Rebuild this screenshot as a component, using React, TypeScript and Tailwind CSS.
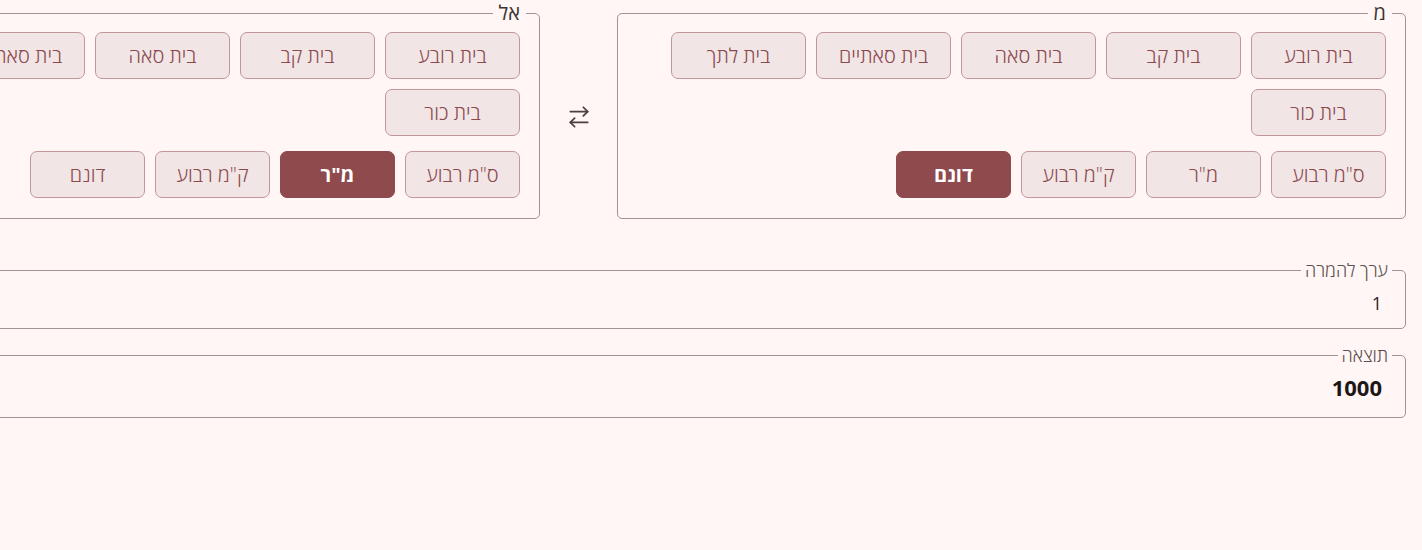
import React from "react";
import { ArrowRightLeft } from "lucide-react";

const groupA = ["בית רובע", "בית קב", "בית סאה", "בית סאתיים", "בית לתך", "בית כור"];
const groupB = ['ס"מ רבוע', 'מ"ר', 'ק"מ רבוע', "דונם"];

function UnitButton({ label, selected, wide }: { label: string; selected: boolean; wide: boolean }) {
  return (
    <button
      type="button"
      className={
        (wide ? "w-[135px] " : "w-[115px] ") +
        "h-[47px] rounded-[7px] border text-[20px] flex items-center justify-center " +
        (selected
          ? "bg-[#8f4a4d] border-[#8f4a4d] text-white font-bold text-[19px]"
          : "bg-[#f2e5e6] border-[#c3979a] text-[#8b4a4f] font-light")
      }
    >
      {label}
    </button>
  );
}

function UnitPanel({ title, selected }: { title: string; selected: string }) {
  return (
    <fieldset className="w-[789px] shrink-0 border border-[#a39292] rounded-[5px] px-[13px] pt-[7px] pb-[20px] min-w-0">
      <legend className="px-[6px] text-[20px] leading-6 text-[#3e3434]">{title}</legend>
      <div className="px-[6px] flex flex-col gap-[15px]">
        <div className="flex flex-wrap gap-[10px]">
          {groupA.map((u) => (
            <UnitButton key={u} label={u} selected={u === selected} wide />
          ))}
        </div>
        <div className="flex flex-wrap gap-[10px]">
          {groupB.map((u) => (
            <UnitButton key={u} label={u} selected={u === selected} wide={false} />
          ))}
        </div>
      </div>
    </fieldset>
  );
}

export default function App() {
  return (
    <div
      dir="rtl"
      className="min-h-[550px] bg-[#fff6f5] overflow-hidden [font-family:'Open_Sans','Noto_Sans',sans-serif]"
    >
      <div className="w-[1687px] px-4 pt-[1px]">
        <div className="flex items-stretch">
          <UnitPanel title="מ" selected="דונם" />
          <div className="w-[77px] shrink-0 flex items-center justify-center pt-[13px]">
            <ArrowRightLeft size={26} strokeWidth={1.6} className="text-[#4b3f40]" />
          </div>
          <UnitPanel title="אל" selected='מ"ר' />
        </div>

        <fieldset className="mt-[41px] border border-[#a39292] rounded-[5px] px-[13px] pt-[10px] pb-[12px] min-w-0">
          <legend className="px-[4px] text-[18px] leading-5 font-light text-[#5a4e4e]">ערך להמרה</legend>
          <div className="px-[10px] text-[18px] leading-[26px] text-[#2b2222]">1</div>
        </fieldset>

        <fieldset className="mt-[16px] border border-[#a39292] rounded-[5px] px-[13px] pt-[7px] pb-[15px] min-w-0">
          <legend className="px-[4px] text-[18px] leading-5 font-light text-[#5a4e4e]">תוצאה</legend>
          <div className="px-[10px] text-[22px] leading-[30px] font-bold text-[#1e1616]">1000</div>
        </fieldset>
      </div>
    </div>
  );
}
